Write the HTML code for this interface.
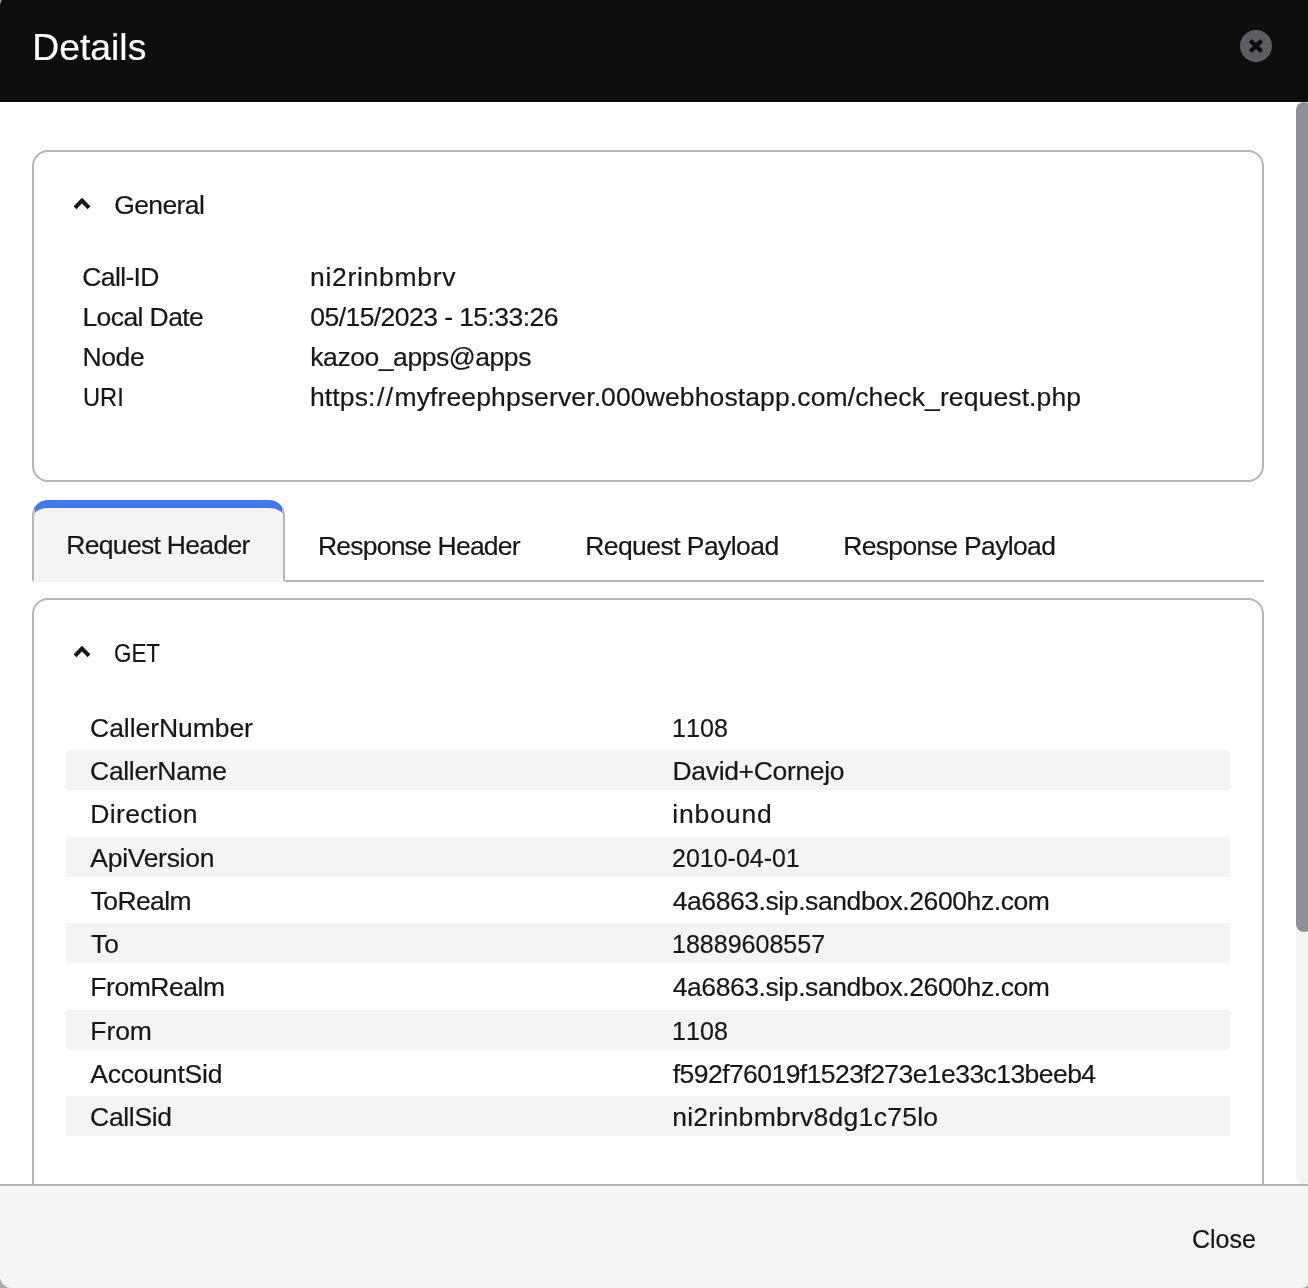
<!DOCTYPE html>
<html lang="en">
<head>
<meta charset="utf-8">
<title>Details</title>
<style>
html,body{margin:0;padding:0;}
body{width:1308px;height:1288px;overflow:hidden;background:#a9a9a9;font-family:"Liberation Sans",sans-serif;color:#17171a;position:relative;}
/* window frame: the capture is cropped 6px at the top and 4px at the right */
.frame{will-change:transform;position:absolute;left:0;top:-6px;width:1312px;height:1294px;border-radius:12px;overflow:hidden;}
.dialog{position:absolute;left:0;top:6px;width:1312px;height:1288px;background:#fff;}
.hdr{position:absolute;left:0;top:0;width:1312px;height:102px;background:#0e0e0e;}
.hdr::before{content:"";position:absolute;left:0;top:-6px;width:100%;height:6px;background:#0e0e0e;}
.t{-webkit-text-stroke:0.2px currentColor;position:absolute;white-space:nowrap;font-size:26.5px;line-height:40px;height:40px;transform-origin:0 50%;margin:0;padding:0;font-weight:normal;text-decoration:none;color:inherit;}
.title{font-size:37.3px;line-height:60px;height:60px;color:#fff;}
.close-x{position:absolute;left:1240px;top:30px;}
.panel{position:absolute;left:32px;width:1228px;border:2px solid #b5b5bd;border-radius:16px;background:#fff;}
.general{top:150px;height:328px;}
.getp{top:598px;height:700px;}
.chev{position:absolute;}
.sl{font-style:normal;padding-left:1.4px;letter-spacing:1.4px;}
.btn{border:0;background:none;font-family:inherit;color:inherit;text-align:left;}
.tabs{position:absolute;left:0;top:500px;width:1264px;height:82px;}
.tabline{position:absolute;left:284px;top:80px;width:980px;height:2px;background:#b5b5bd;}
.tab-active{position:absolute;left:32px;top:0;width:249px;height:72px;background:#f4f4f4;border:2px solid #b5b5bd;border-top:8px solid #4277e9;border-bottom:2px solid #f4f4f4;border-radius:16px 16px 0 0;}
.row{position:absolute;left:32px;width:1164px;height:40px;}
.row.odd{background:#f4f4f4;}
.sbar{position:absolute;left:1296px;top:102px;width:16px;height:1082px;background:#f4f4f4;border-radius:8px;overflow:hidden;}
.thumb{position:absolute;left:0;top:0;width:16px;height:830px;background:#8f8f9a;border-radius:8px;}
.ftr{position:absolute;left:0;top:1184px;width:1312px;height:102px;background:#f4f4f4;border-top:2px solid #b5b5bd;}
</style>
</head>
<body>
<div class="frame">
<div class="dialog" role="dialog" aria-label="Details">
  <div class="content">
    <section class="panel general">
      <svg class="chev" style="left:36px;top:40px" width="24" height="24" viewBox="0 0 24 24" aria-hidden="true"><polygon points="12,5.8 20.4,14.3 17.6,17.2 12,11.4 6.4,17.2 3.6,14.3" fill="#17171a"/></svg>
      <h3 class="t" style="left:80.2px;top:33px;letter-spacing:-0.60px;">General</h3>
      <div class="grow"><span class="t k" style="left:48.3px;top:105px;letter-spacing:-0.63px;">Call-ID</span><span class="t v" style="left:276.0px;top:105px;letter-spacing:0.70px;">ni2rinbmbrv</span></div>
      <div class="grow"><span class="t k" style="left:48.4px;top:145px;letter-spacing:-0.58px;">Local Date</span><span class="t v" style="left:276.3px;top:145px;font-kerning:none;letter-spacing:-0.56px;">05/15/2023 - 15:33:26</span></div>
      <div class="grow"><span class="t k" style="left:48.4px;top:185px;letter-spacing:-0.33px;">Node</span><span class="t v" style="left:276.3px;top:185px;letter-spacing:-0.44px;">kazoo_apps@apps</span></div>
      <div class="grow"><span class="t k" style="left:48.6px;top:225px;transform:scaleX(0.8929);">URI</span><span class="t v" style="left:276.0px;top:225px;letter-spacing:0.12px;">https:<i class="sl">//</i>myfreephpserver.000webhostapp.com/check_request.php</span></div>
    </section>
    <nav class="tabs">
      <div class="tabline"></div>
      <div class="tab-active"></div>
      <a class="t tab on" style="left:66.3px;top:25px;letter-spacing:-0.69px;">Request Header</a>
      <a class="t tab" style="left:318.0px;top:26px;letter-spacing:-0.79px;">Response Header</a>
      <a class="t tab" style="left:585.2px;top:26px;letter-spacing:-0.56px;">Request Payload</a>
      <a class="t tab" style="left:843.2px;top:26px;letter-spacing:-0.65px;">Response Payload</a>
    </nav>
    <section class="panel getp">
      <svg class="chev" style="left:36px;top:40px" width="24" height="24" viewBox="0 0 24 24" aria-hidden="true"><polygon points="12,5.8 20.4,14.3 17.6,17.2 12,11.4 6.4,17.2 3.6,14.3" fill="#17171a"/></svg>
      <h3 class="t" style="left:80.4px;top:33px;transform:scaleX(0.8453);">GET</h3>
      <div class="row" style="top:107px"><span class="t k" style="left:24.1px;top:1px;letter-spacing:-0.06px;">CallerNumber</span><span class="t v" style="left:606.0px;top:1px;font-kerning:none;transform:scaleX(0.9482);">1108</span></div>
      <div class="row odd" style="top:150px"><span class="t k" style="left:24.1px;top:1px;letter-spacing:-0.33px;">CallerName</span><span class="t v" style="left:606.5px;top:1px;letter-spacing:-0.33px;">David+Cornejo</span></div>
      <div class="row" style="top:193px"><span class="t k" style="left:24.3px;top:1px;letter-spacing:0.33px;">Direction</span><span class="t v" style="left:606.2px;top:1px;letter-spacing:0.87px;">inbound</span></div>
      <div class="row odd" style="top:237px"><span class="t k" style="left:24.3px;top:1px;letter-spacing:-0.29px;">ApiVersion</span><span class="t v" style="left:606.1px;top:1px;font-kerning:none;transform:scaleX(0.9425);">2010-04-01</span></div>
      <div class="row" style="top:280px"><span class="t k" style="left:24.7px;top:1px;letter-spacing:-0.63px;">ToRealm</span><span class="t v" style="left:606.7px;top:1px;font-kerning:none;letter-spacing:-0.42px;">4a6863.sip.sandbox.2600hz.com</span></div>
      <div class="row odd" style="top:323px"><span class="t k" style="left:24.7px;top:1px;transform:scaleX(0.9926);">To</span><span class="t v" style="left:606.0px;top:1px;font-kerning:none;transform:scaleX(0.9440);">18889608557</span></div>
      <div class="row" style="top:367px"><span class="t k" style="left:24.3px;top:0px;letter-spacing:-0.45px;">FromRealm</span><span class="t v" style="left:606.7px;top:0px;font-kerning:none;letter-spacing:-0.42px;">4a6863.sip.sandbox.2600hz.com</span></div>
      <div class="row odd" style="top:410px"><span class="t k" style="left:24.3px;top:1px;letter-spacing:-0.07px;">From</span><span class="t v" style="left:606.0px;top:1px;font-kerning:none;transform:scaleX(0.9482);">1108</span></div>
      <div class="row" style="top:453px"><span class="t k" style="left:24.2px;top:1px;letter-spacing:-0.20px;">AccountSid</span><span class="t v" style="left:606.8px;top:1px;font-kerning:none;letter-spacing:-0.56px;">f592f76019f1523f273e1e33c13beeb4</span></div>
      <div class="row odd" style="top:496px"><span class="t k" style="left:24.1px;top:1px;letter-spacing:-0.33px;">CallSid</span><span class="t v" style="left:606.2px;top:1px;letter-spacing:0.27px;">ni2rinbmbrv8dg1c75lo</span></div>
    </section>
  </div>
  <div class="sbar"><div class="thumb"></div></div>
  <header class="hdr">
    <h2 class="t title" style="left:32.3px;top:17px;">Details</h2>
    <svg class="close-x" width="32" height="32" viewBox="0 0 32 32" aria-hidden="true"><circle cx="16" cy="16" r="16" fill="#5c5d63"/><path d="M10.4 10.4 L21.6 21.6 M21.6 10.4 L10.4 21.6" stroke="#0e0e0e" stroke-width="4.2" fill="none"/></svg>
  </header>
  <footer class="ftr">
    <button class="t btn" style="left:1192.4px;top:33px;transform:scaleX(0.9439);">Close</button>
  </footer>
</div>
</div>
</body>
</html>
